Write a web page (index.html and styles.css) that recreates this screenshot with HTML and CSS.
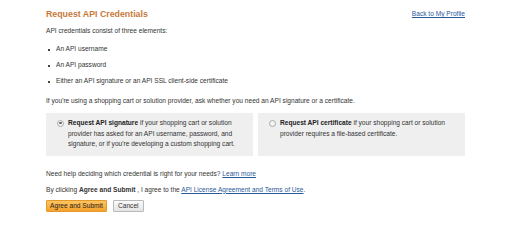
FILE: index.html
```html
<!DOCTYPE html>
<html>
<head>
<meta charset="utf-8">
<link rel="stylesheet" href="styles.css">
</head>
<body>
<div class="page">
  <div class="header">
    <h1 class="title">Request API Credentials</h1>
    <a class="link back" href="#">Back to My Profile</a>
  </div>
  <p class="text intro">API credentials consist of three elements:</p>
  <ul class="list">
    <li>An API username</li>
    <li>An API password</li>
    <li>Either an API signature or an API SSL client-side certificate</li>
  </ul>
  <p class="text">If you're using a shopping cart or solution provider, ask whether you need an API signature or a certificate.</p>
  <div class="options">
    <label class="option">
      <span class="radio checked"></span>
      <span class="option-text"><b>Request API signature</b> if your shopping cart or solution provider has asked for an API username, password, and signature, or if you're developing a custom shopping cart.</span>
    </label>
    <label class="option">
      <span class="radio"></span>
      <span class="option-text"><b>Request API certificate</b> if your shopping cart or solution provider requires a file-based certificate.</span>
    </label>
  </div>
  <p class="text help">Need help deciding which credential is right for your needs? <a class="link" href="#">Learn more</a></p>
  <p class="text agree">By clicking <b>Agree and Submit</b> , I agree to the <a class="link" href="#">API License Agreement and Terms of Use</a>.</p>
  <div class="buttons">
    <button class="btn primary">Agree and Submit</button>
    <button class="btn">Cancel</button>
  </div>
</div>
</body>
</html>
```
FILE: styles.css
```css
html, body { margin: 0; padding: 0; background: #fff; }
body { font-family: "Liberation Sans", Arial, sans-serif; color: #333; font-size: 6.6px; }
.page { width: 419px; padding: 9px 0 0 46px; }
.header { display: flex; justify-content: space-between; align-items: flex-start; }
.title { margin: 0; font-size: 8.8px; font-weight: bold; color: #c87a3c; line-height: 10px; }
.link { color: #2a5a9a; text-decoration: underline; }
.back { font-size: 6.6px; margin-top: 1px; }
.text { margin: 0; line-height: 8px; }
.intro { margin-top: 8px; }
.list { margin: 10px 0 0 0; padding: 0 0 0 10px; list-style: none; }
.list li { position: relative; line-height: 8px; margin-top: 8px; }
.list li:last-child { margin-bottom: 12px; }
.list li::before { content: ""; position: absolute; left: -8px; top: 3.5px; width: 2px; height: 2px; background: #444; }
.options { display: flex; gap: 5px; margin-top: 8px; }
.option { flex: 1; background: #efefef; display: flex; align-items: flex-start; padding: 5px 8px 6px 11px; min-height: 31px; }
.radio { flex: none; width: 5px; height: 5px; border: 1px solid #aaa; border-radius: 50%; background: #f4f4f4; margin: 1.5px 4px 0 0; position: relative; }
.radio.checked::after { content: ""; position: absolute; left: 1.2px; top: 1.2px; width: 2.6px; height: 2.6px; border-radius: 50%; background: #666; }
.option-text { line-height: 10.5px; }
.option-text b { color: #222; }
.help { margin-top: 14px; }
.agree { margin-top: 8px; }
.agree b { color: #333; }
.buttons { display: flex; gap: 6px; margin-top: 6px; }
.btn { font-family: "Liberation Sans", Arial, sans-serif; font-size: 6.6px; height: 12px; padding: 0 4px; border: 1px solid #b9b9b9; background: linear-gradient(#fafafa, #e4e4e4); color: #333; border-radius: 1px; white-space: nowrap; line-height: 10px; }
.btn.primary { background: linear-gradient(#ffc560, #f5a22a); border-color: #e39a2c; color: #222; width: 61px; padding: 0; }
```
